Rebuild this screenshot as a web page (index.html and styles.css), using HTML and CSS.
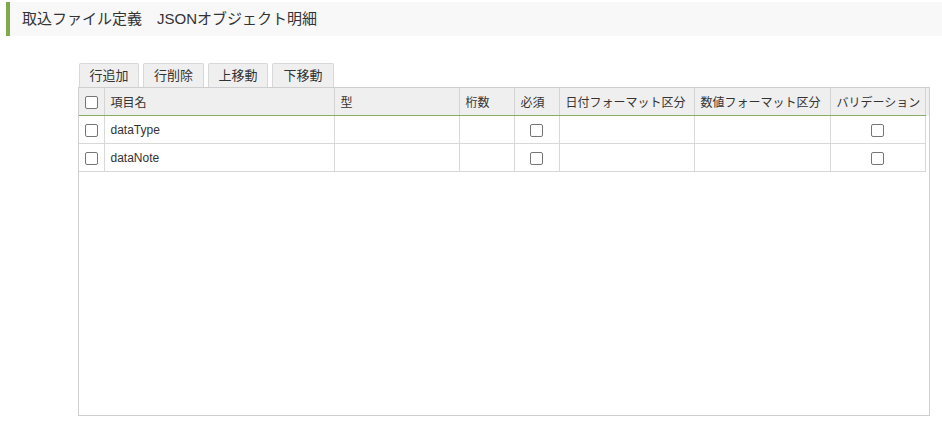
FILE: index.html
```html
<!DOCTYPE html>
<html lang="ja">
<head>
<meta charset="utf-8">
<link rel="stylesheet" href="styles.css">
</head>
<body>
<div class="title">取込ファイル定義　JSONオブジェクト明細</div>
<div class="panel">
  <div class="toolbar">
    <button class="btn w60">行追加</button>
    <button class="btn w61">行削除</button>
    <button class="btn w60">上移動</button>
    <button class="btn w62">下移動</button>
  </div>
  <div class="grid">
    <div class="grid-head">
      <table class="tbl">
        <colgroup>
          <col class="c-chk"><col class="c-name"><col class="c-type"><col class="c-len"><col class="c-req"><col class="c-date"><col class="c-num"><col class="c-val">
        </colgroup>
        <tr>
          <th class="center"><span class="cb"></span></th>
          <th>項目名</th>
          <th>型</th>
          <th>桁数</th>
          <th>必須</th>
          <th>日付フォーマット区分</th>
          <th>数値フォーマット区分</th>
          <th>バリデーション</th>
        </tr>
      </table>
    </div>
    <table class="tbl body">
      <colgroup>
        <col class="c-chk"><col class="c-name"><col class="c-type"><col class="c-len"><col class="c-req"><col class="c-date"><col class="c-num"><col class="c-val">
      </colgroup>
      <tr>
        <td class="center"><span class="cb"></span></td>
        <td>dataType</td>
        <td></td>
        <td></td>
        <td class="center"><span class="cb"></span></td>
        <td></td>
        <td></td>
        <td class="center"><span class="cb"></span></td>
      </tr>
      <tr>
        <td class="center"><span class="cb"></span></td>
        <td>dataNote</td>
        <td></td>
        <td></td>
        <td class="center"><span class="cb"></span></td>
        <td></td>
        <td></td>
        <td class="center"><span class="cb"></span></td>
      </tr>
    </table>
  </div>
</div>
</body>
</html>
```
FILE: styles.css
```css
html, body {
  margin: 0;
  padding: 0;
  background: #fff;
  font-family: "Liberation Sans", "Noto Sans CJK JP", sans-serif;
  color: #333;
}
.title {
  margin: 2px 0 0 6px;
  height: 34px;
  line-height: 34px;
  border-left: 4px solid #7fab4a;
  background: #f8f8f8;
  padding-left: 12px;
  font-size: 15px;
  color: #333;
}
.panel {
  margin: 27px 0 0 78px;
  width: 852px;
}
.toolbar {
  display: flex;
  gap: 4px;
  padding-left: 1px;
}
.btn {
  box-sizing: border-box;
  height: 24px;
  padding: 0;
  border: 1px solid #d8d8d8;
  border-bottom: none;
  border-radius: 2px 2px 0 0;
  background: #efefef;
  font-family: "Liberation Sans", "Noto Sans CJK JP", sans-serif;
  font-size: 13px;
  color: #333;
  line-height: 22px;
  text-align: center;
}
.w60 { width: 60px; }
.w61 { width: 61px; }
.w62 { width: 62px; }
.grid {
  border: 1px solid #cfcfcf;
  height: 327px;
  box-sizing: content-box;
}
.grid-head {
  background: #efefef;
}
.tbl {
  border-collapse: collapse;
  table-layout: fixed;
  width: 846px;
  font-size: 12px;
}
.c-chk { width: 25px; }
.c-name { width: 230px; }
.c-type { width: 125px; }
.c-len { width: 55px; }
.c-req { width: 45px; }
.c-date { width: 135px; }
.c-num { width: 136px; }
.c-val { width: 95px; }
th {
  height: 27px;
  padding: 0 6px;
  text-align: left;
  font-weight: normal;
  border-right: 1px solid #d4d4d4;
  border-bottom: 1px solid #8aab62;
  white-space: nowrap;
  overflow: hidden;
}
th.center, td.center {
  padding: 0;
  text-align: center;
}
td {
  height: 27px;
  padding: 0 6px;
  border-right: 1px solid #d8d8d8;
  border-bottom: 1px solid #d8d8d8;
  white-space: nowrap;
}
.cb {
  display: inline-block;
  width: 11px;
  height: 11px;
  border: 1px solid #767676;
  border-radius: 2px;
  background: #fff;
  vertical-align: middle;
}
```
